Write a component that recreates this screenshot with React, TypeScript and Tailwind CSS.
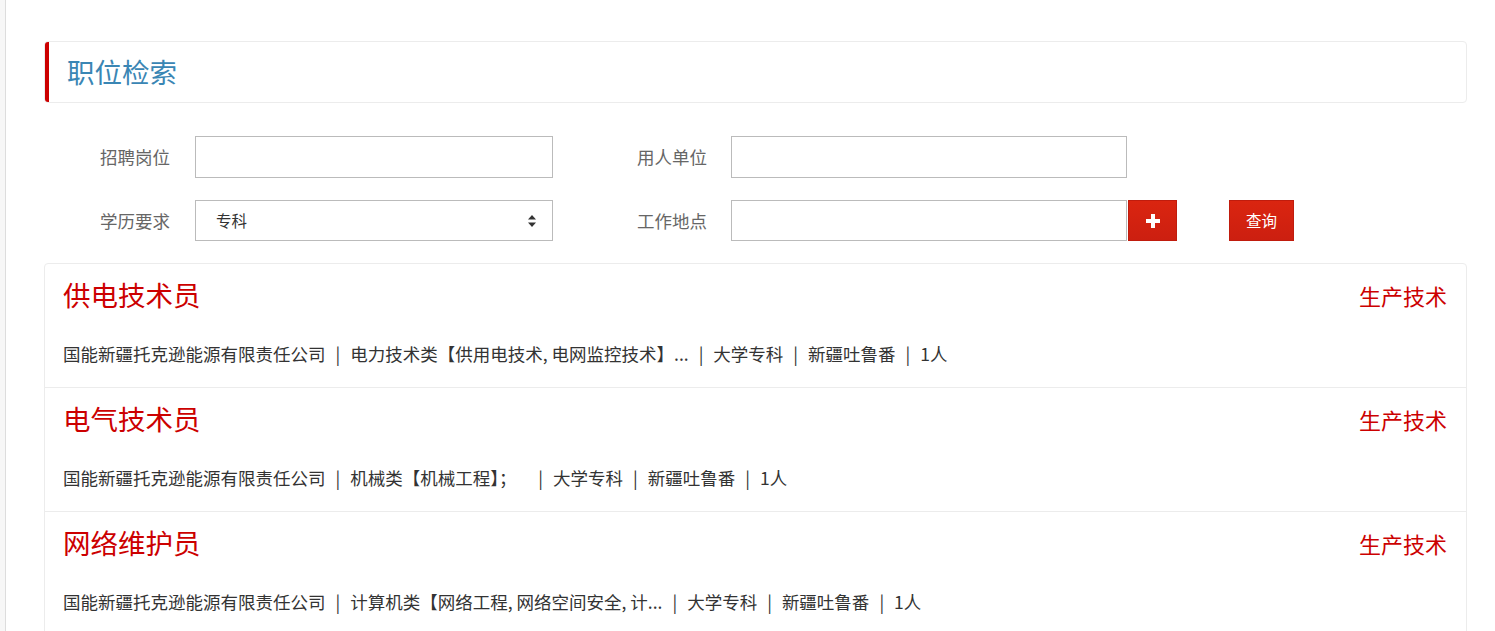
const jobs = [
  {
    title: "供电技术员",
    category: "生产技术",
    meta: ["国能新疆托克逊能源有限责任公司", "电力技术类【供用电技术, 电网监控技术】...", "大学专科", "新疆吐鲁番", "1人"],
  },
  {
    title: "电气技术员",
    category: "生产技术",
    meta: ["国能新疆托克逊能源有限责任公司", "机械类【机械工程】；\u00a0\u00a0\u00a0", "大学专科", "新疆吐鲁番", "1人"],
  },
  {
    title: "网络维护员",
    category: "生产技术",
    meta: ["国能新疆托克逊能源有限责任公司", "计算机类【网络工程, 网络空间安全, 计...", "大学专科", "新疆吐鲁番", "1人"],
  },
];

// 검색 폼 라벨
function Label({ text, width }: { text: string; width: string }) {
  return <div className={`${width} shrink-0 text-right text-[17.5px] text-[#666] leading-[24px]`}>{text}</div>;
}

export default function App() {
  return (
    <div
      className="h-screen overflow-hidden bg-[#f7f7f7] pl-[5px]"
      style={{ fontFamily: '"Noto Sans CJK SC", "Noto Sans", sans-serif' }}
    >
      <div className="h-full bg-white border-l border-[#dddddd] pl-[38px] pr-[28px] pt-[41px]">
        {/* 제목 */}
        <div className="flex h-[62px] rounded-[4px] border border-[#ececec] overflow-hidden">
          <div className="w-[5px] shrink-0 bg-[#cc0000] rounded-l-[3px] -ml-px -my-px" />
          <div className="flex items-center pl-[18px] text-[27.5px] text-[#3a86b4] leading-none">职位检索</div>
        </div>

        {/* 검색 폼 */}
        <div className="mt-[33px] flex flex-col gap-[22px]">
          <div className="flex items-center">
            <Label text="招聘岗位" width="w-[126px]" />
            <input className="ml-[25px] h-[42px] w-[358px] border border-[#bbbbbb] outline-none" />
            <Label text="用人单位" width="w-[154px]" />
            <input className="ml-[24px] h-[42px] w-[396px] border border-[#bbbbbb] outline-none" />
          </div>
          <div className="flex items-center">
            <Label text="学历要求" width="w-[126px]" />
            <div className="relative ml-[25px] h-[41px] w-[358px] border border-[#bbbbbb] flex items-center pl-[20px] text-[15.5px] text-[#333]">
              <span>专科</span>
              <svg className="absolute right-[15px] top-1/2 -translate-y-1/2" width="10" height="14" viewBox="0 0 10 14">
                <path d="M5 1 L9 5.5 H1 Z" fill="#333" />
                <path d="M5 13 L9 8.5 H1 Z" fill="#333" />
              </svg>
            </div>
            <Label text="工作地点" width="w-[154px]" />
            <input className="ml-[24px] h-[41px] w-[396px] border border-[#bbbbbb] outline-none" />
            <button className="ml-[1px] h-[41px] w-[49px] bg-gradient-to-b from-[#da2510] to-[#cc1f10] border border-[#c01c0d] flex items-center justify-center">
              <svg width="14" height="14" viewBox="0 0 14 14">
                <rect x="5" y="0" width="4" height="14" fill="#fff" />
                <rect x="0" y="5" width="14" height="4" fill="#fff" />
              </svg>
            </button>
            <button className="ml-[52px] h-[41px] w-[65px] bg-gradient-to-b from-[#da2510] to-[#cc1f10] border border-[#c01c0d] text-white text-[15.5px]">
              查询
            </button>
          </div>
        </div>

        {/* 직위 목록 */}
        <div className="mt-[22px] rounded-[4px] border border-[#ececec]">
          {jobs.map((job) => (
            <div key={job.title} className="border-b border-[#ececec] pl-[18px] pr-[19px] pt-[11px] pb-[21px]">
              <div className="flex h-[40px] items-center justify-between">
                <span className="text-[27.5px] text-[#cc0000] leading-none">{job.title}</span>
                <span className="text-[22px] text-[#cc0000] leading-none">{job.category}</span>
              </div>
              <div className="mt-[26px] flex items-center text-[17.5px] text-[#333] leading-[25px] whitespace-nowrap">
                {job.meta.map((m, i) => (
                  <span key={i} className="flex items-center">
                    {i > 0 && <span className="mx-[10px] text-[#333]">|</span>}
                    <span>{m}</span>
                  </span>
                ))}
              </div>
            </div>
          ))}
        </div>
      </div>
    </div>
  );
}
